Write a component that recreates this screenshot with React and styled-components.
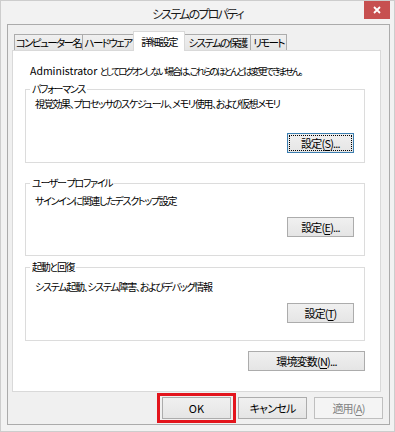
import styled, { createGlobalStyle } from "styled-components";

const GlobalStyle = createGlobalStyle`
  html, body { margin: 0; padding: 0; background: #fff; }
  body {
    font-family: "Noto Sans CJK JP", "Noto Sans", sans-serif;
    font-size: 10px;
    letter-spacing: -1.3px;
    color: #000;
    font-feature-settings: "palt";
  }
  * { box-sizing: border-box; }
`;

const Lat = styled.span`
  font-size: ${(p) => p.$size || 11}px;
  letter-spacing: 0;
`;

const Window = styled.div`
  width: 395px;
  height: 432px;
  display: flex;
  flex-direction: column;
  background: #f2f2f2;
  border: 1px solid #cdcdcd;
  padding: 0 4px 6px 6px;
`;

const TitleBar = styled.div`
  height: 23px;
  margin: 0 -4px 0 -6px;
  display: grid;
  grid-template-columns: 1fr auto 1fr;
  align-items: start;
`;

const Title = styled.div`
  grid-column: 2;
  line-height: 25px;
  font-size: 12px;
  letter-spacing: -1.8px;
  color: #1a1a1a;
`;

const CloseButton = styled.div`
  grid-column: 3;
  justify-self: end;
  margin-right: 4px;
  width: 26px;
  height: 18px;
  background: #c75050;
  display: flex;
  align-items: center;
  justify-content: center;
`;

const Client = styled.div`
  flex: 1;
  display: flex;
  flex-direction: column;
  background: #f0f0f0;
  border: 1px solid #ababab;
  padding: 6px 6px 5px 4px;
`;

const TabRow = styled.div`
  display: flex;
  align-items: flex-end;
  height: 19px;
  padding-left: 2px;
`;

const Tab = styled.div`
  position: relative;
  width: ${(p) => p.$w}px;
  height: ${(p) => (p.$active ? 20 : 16)}px;
  margin-left: ${(p) => (p.$first ? 0 : -1)}px;
  margin-bottom: ${(p) => (p.$active ? -1 : 0)}px;
  z-index: ${(p) => (p.$active ? 2 : 1)};
  border: 1px solid ${(p) => (p.$active ? "#d9d9d9" : "#acacac")};
  border-bottom: none;
  background: ${(p) => (p.$active ? "#fff" : "linear-gradient(#f0f0f0, #e5e5e5)")};
  display: flex;
  align-items: center;
  justify-content: center;
  font-size: 10.5px;
  letter-spacing: -1.6px;
  line-height: 14px;
  padding-top: ${(p) => (p.$active ? 0 : 1)}px;
  white-space: nowrap;
`;

const Panel = styled.div`
  flex: 1;
  margin-right: 2px;
  display: flex;
  flex-direction: column;
  background: #fff;
  border: 1px solid #d9d9d9;
  padding: 12px 15px 0 12px;
`;

const Note = styled.div`
  line-height: 16px;
  padding-left: 5px;
  font-size: 9.5px;
  letter-spacing: -2.1px;
  white-space: nowrap;
`;

const Group = styled.fieldset`
  margin: ${(p) => p.$mt}px 0 0 0;
  padding: 0 10px ${(p) => p.$pb}px 9px;
  border: 1px solid #dcdcdc;
  min-width: 0;
`;

const Legend = styled.legend`
  padding: 0 2px;
  margin-left: -5px;
  line-height: 14px;
`;

const Desc = styled.div`
  margin-top: ${(p) => p.$mt}px;
  line-height: 16px;
  white-space: nowrap;
`;

const ButtonRow = styled.div`
  display: flex;
  justify-content: flex-end;
  margin-top: ${(p) => p.$mt}px;
`;

const Button = styled.div`
  width: ${(p) => p.$w}px;
  height: ${(p) => p.$h || 20}px;
  display: flex;
  align-items: center;
  justify-content: center;
  font-size: 11px;
  letter-spacing: -0.8px;
  border: 1px solid ${(p) => (p.$focus ? "#3c7fb1" : p.$disabled ? "#bfbfbf" : "#acacac")};
  background: ${(p) => (p.$disabled ? "#f4f4f4" : "linear-gradient(#f0f0f0, #e5e5e5)")};
  color: ${(p) => (p.$disabled ? "#838383" : "#000")};
  outline: ${(p) => (p.$focus ? "1px dotted #000" : "none")};
  outline-offset: -3px;
  white-space: nowrap;

  u { text-underline-offset: 2px; }
`;

const Footer = styled.div`
  display: flex;
  justify-content: flex-end;
  gap: 7px;
  margin-top: 5px;
`;

const Highlight = styled.div`
  position: relative;

  &::after {
    content: "";
    position: absolute;
    inset: -4px -5px;
    border: 3px solid #e3141c;
    pointer-events: none;
  }
`;

const tabs = [
  { label: "コンピューター名", w: 69 },
  { label: "ハードウェア", w: 52 },
  { label: "詳細設定", w: 52, active: true },
  { label: "システムの保護", w: 67 },
  { label: "リモート", w: 37 },
];

export default function App() {
  return (
    <>
      <GlobalStyle />
      <Window>
        <TitleBar>
          <Title>システムのプロパティ</Title>
          <CloseButton>
            <svg width="8" height="8" viewBox="0 0 8 8">
              <path d="M1 1 L7 7 M7 1 L1 7" stroke="#fff" strokeWidth="1.8" />
            </svg>
          </CloseButton>
        </TitleBar>
        <Client>
          <TabRow>
            {tabs.map((t, i) => (
              <Tab key={t.label} $w={t.w} $active={t.active} $first={i === 0}>
                {t.label}
              </Tab>
            ))}
          </TabRow>
          <Panel>
            <Note>
              <Lat $size={10.5}>Administrator </Lat>としてログオンしない場合は、これらのほとんどは変更できません。
            </Note>
            <Group $mt={3} $pb={9}>
              <Legend>パフォーマンス</Legend>
              <Desc $mt={0}>視覚効果、プロセッサのスケジュール、メモリ使用、および仮想メモリ</Desc>
              <ButtonRow $mt={21}>
                <Button $w={67} $focus>
                  設定(<u>S</u>)...
                </Button>
              </ButtonRow>
            </Group>
            <Group $mt={13} $pb={18}>
              <Legend>ユーザー プロファイル</Legend>
              <Desc $mt={3}>サインインに関連したデスクトップ設定</Desc>
              <ButtonRow $mt={8}>
                <Button $w={67}>
                  設定(<u>E</u>)...
                </Button>
              </ButtonRow>
            </Group>
            <Group $mt={4} $pb={17}>
              <Legend>起動と回復</Legend>
              <Desc $mt={5}>システム起動、システム障害、およびデバッグ情報</Desc>
              <ButtonRow $mt={8}>
                <Button $w={67}>
                  設定(<u>T</u>)
                </Button>
              </ButtonRow>
            </Group>
            <ButtonRow $mt={10}>
              <Button $w={117}>
                環境変数(<u>N</u>)...
              </Button>
            </ButtonRow>
          </Panel>
          <Footer>
            <Highlight>
              <Button $w={69} $h={22}>
                <Lat>OK</Lat>
              </Button>
            </Highlight>
            <Button $w={69} $h={22}>キャンセル</Button>
            <Button $w={69} $h={22} $disabled>
              適用(<u>A</u>)
            </Button>
          </Footer>
        </Client>
      </Window>
    </>
  );
}
